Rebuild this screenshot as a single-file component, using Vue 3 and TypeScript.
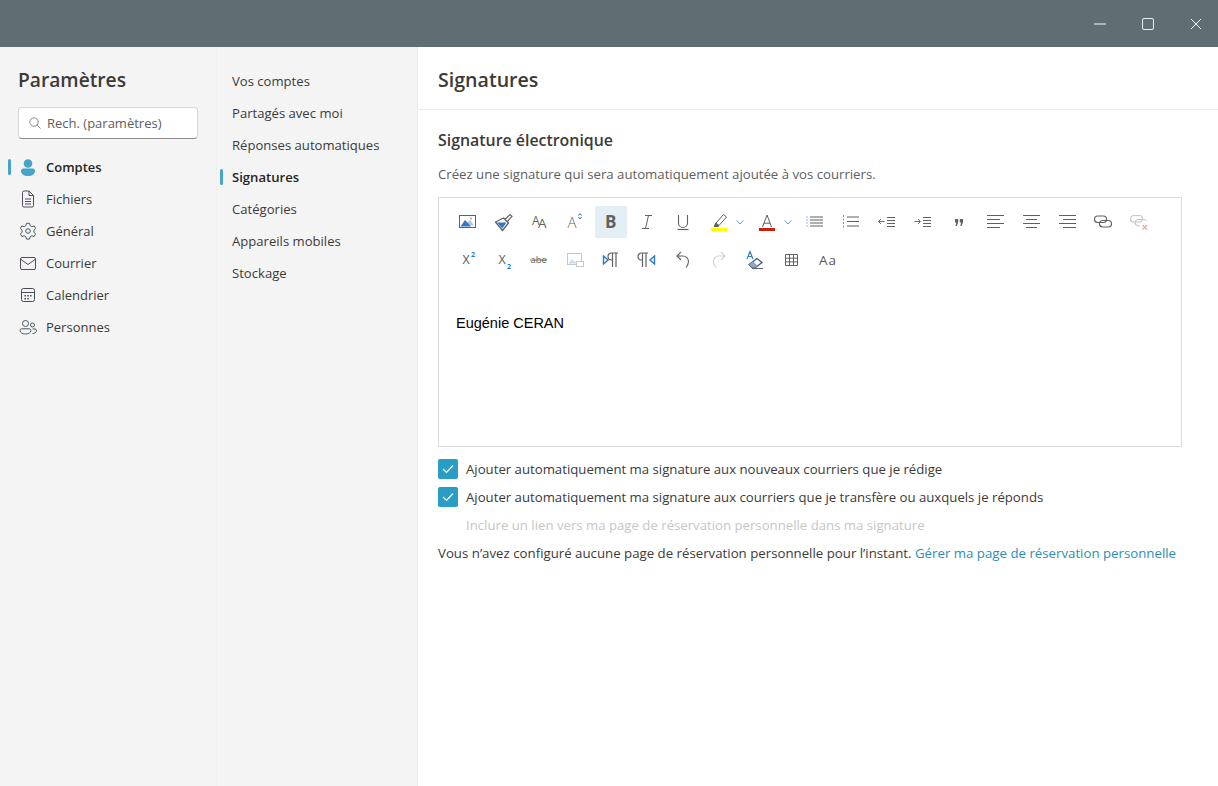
<script setup lang="ts">
interface Tool { id: string; svg: string; active?: boolean; chevron?: boolean }
const G = '#616161', B = '#2f78c8', L = '#c8c8c8'
const line = (x1: number, y1: number, x2: number, y2: number, c = G) => `<path d="M${x1} ${y1}H${x2}" stroke="${c}" fill="none"/>`
const lines = (rows: [number, number][], ys: number[]) => rows.map((r, i) => line(r[0], ys[i], r[1], ys[i])).join('')
const ALIGN_Y = [3.5, 7.5, 11.5, 15.5]
const row1: Tool[] = [
  { id: 'image', svg: `<rect x="2.5" y="3.5" width="16" height="12" fill="none" stroke="${G}"/><path d="M10 11l3-3 4 5.500h-6z" fill="#b9c6d6"/><path d="M3.500 14.500 8 8l6 6.500z" fill="${B}"/><circle cx="14" cy="6.500" r="1" fill="#9ab"/>` },
  { id: 'brush', svg: `<path d="M12 7.500 17 2.500l2 1.800-4.500 5.200" fill="none" stroke="${G}" stroke-width="1.200"/><path d="M2.500 10 10.500 6l5 5-6 7.500z" fill="none" stroke="${G}" stroke-width="1.300" stroke-linejoin="round"/><path d="M4 10.500 13.500 10.500 9.300 16.500z" fill="${B}"/>` },
  { id: 'fontsize', svg: `<text x="3" y="12.500" class="ti" font-size="12">A</text><text x="9" y="16" class="ti" font-size="13.500">A</text>` },
  { id: 'grow', svg: `<text x="2.500" y="16" class="ti th" font-size="15">A</text><path d="M13.500 3.500 15 1.500l1.500 2M13.500 5l1.500 2 1.500-2" fill="none" stroke="${B}"/>` },
  { id: 'bold', active: true, svg: `<text x="4" y="16" class="ti tb" font-size="17">B</text>` },
  { id: 'italic', svg: `<path d="M8 3.500h7M5 16.500h7M11.500 3.500 8.500 16.500" fill="none" stroke="${G}"/>` },
  { id: 'underline', svg: `<path d="M5.500 3v8a4.500 4.500 0 0 0 9 0V3" fill="none" stroke="${G}" stroke-width="1.100"/><path d="M4.500 17.500h11" stroke="${G}" stroke-width="1.200"/>` },
  { id: 'highlight', chevron: true, svg: `<path d="M7 11 14.500 2.500l3 2.500L10 13.500z" fill="none" stroke="${G}"/><path d="M6.500 10.500 10.500 14l-1.500 1H4.500z" fill="${G}"/><rect x="2" y="16" width="16" height="3" fill="#ffff00"/>` },
  { id: 'color', chevron: true, svg: `<path d="M5.500 15 10 3l4.500 12M6.900 11.200h6.200" fill="none" stroke="${G}"/><rect x="2" y="16" width="16" height="3" fill="#c8200f"/>` },
  { id: 'bullets', svg: `<path d="M2 4.500v1M2 7.500v1M2 10.500v1M2 13.500v1" stroke="${B}"/>` + lines([[5, 18], [5, 18], [5, 18], [5, 18]], [5, 8, 11, 14]) },
  { id: 'numbers', svg: `<path d="M2.500 3v13" stroke="#5b9be0" stroke-dasharray="2 1.500"/>` + lines([[6, 18], [6, 18], [6, 18]], [5, 9.500, 14]) },
  { id: 'outdent', svg: `<path d="M7.500 9.500h-6M4 7 1.500 9.500 4 12" fill="none" stroke="${B}"/>` + lines([[10, 18], [10, 18], [10, 18], [10, 18]], [5.500, 8.500, 11.500, 14.500]) },
  { id: 'indent', svg: `<path d="M1.500 9.500h6M5 7l2.500 2.500L5 12" fill="none" stroke="${B}"/>` + lines([[10, 18], [10, 18], [10, 18], [10, 18]], [5.500, 8.500, 11.500, 14.500]) },
  { id: 'quote', svg: `<path d="M6 7h3.200v3.200L7.800 14H6.500L7.300 10.500H6zM10.800 7H14v3.200L12.600 14h-1.300l.8-3.500h-1.300z" fill="${G}"/>` },
  { id: 'left', svg: lines([[2, 19], [2, 15], [2, 19], [2, 15]], ALIGN_Y) },
  { id: 'center', svg: lines([[2, 19], [5, 16], [2, 19], [5, 16]], ALIGN_Y) },
  { id: 'right', svg: lines([[2, 19], [6, 19], [2, 19], [6, 19]], ALIGN_Y) },
  { id: 'link', svg: `<rect x="1.500" y="4" width="12" height="6.500" rx="3.250" fill="none" stroke="${G}" stroke-width="1.200"/><rect x="6.500" y="8.500" width="12" height="6.500" rx="3.250" fill="none" stroke="${G}" stroke-width="1.200"/>` },
  { id: 'unlink', svg: `<rect x="1.500" y="3.500" width="12" height="6.500" rx="3.250" fill="none" stroke="${L}" stroke-width="1.200"/><path d="M11 14H9.500a3.250 3.250 0 0 1 0-6.500H15a3.250 3.250 0 0 1 2.500 1.500" fill="none" stroke="${L}" stroke-width="1.200"/><path d="M13.500 13l4.500 4.500M18 13l-4.500 4.500" stroke="#eda79f" stroke-width="1.300"/>` },
]
const row2: Tool[] = [
  { id: 'sup', svg: `<text x="5.500" y="14" class="ti tl" font-size="12.500">X</text><text x="14" y="7" class="ti tbb" font-size="7">2</text>` },
  { id: 'sub', svg: `<text x="5.500" y="14" class="ti tl" font-size="12.500">X</text><text x="14" y="18.500" class="ti tbb" font-size="7">2</text>` },
  { id: 'strike', svg: `<text x="1.500" y="13" class="ti" font-size="9.500">abe</text><path d="M1 10h17" stroke="${G}" stroke-width=".8"/>` },
  { id: 'alt', svg: `<rect x="2.500" y="3.500" width="14" height="11" fill="none" stroke="${L}"/><path d="M3.500 13.500 7 9l3 3 2-1 3 2.500z" fill="#cfdcec"/><rect x="11.500" y="11.500" width="7" height="5" fill="#fff" stroke="${L}"/>` },
  { id: 'ltr', svg: `<path d="M2.500 6l4.500 4-4.500 4z" fill="none" stroke="${B}" stroke-width="1.400"/><path d="M11.500 3v14M15 3v14M17 3h-6.500a3.500 3.500 0 0 0 0 7h1" fill="none" stroke="${G}" stroke-width="1.200"/>` },
  { id: 'rtl', svg: `<path d="M17.500 6 13 10l4.500 4z" fill="none" stroke="${B}" stroke-width="1.400"/><path d="M5.500 3v14M9 3v14M11 3H4.500a3.500 3.500 0 0 0 0 7h1" fill="none" stroke="${G}" stroke-width="1.200"/>` },
  { id: 'undo', svg: `<path d="M8 2 4 6l4 4M4.500 6H10a5.500 5.500 0 0 1 5.500 5.500c0 2.300-1 4-2.500 6" fill="none" stroke="${G}" stroke-width="1.100"/>` },
  { id: 'redo', svg: `<path d="M12 2l4 4-4 4M15.500 6H10a5.500 5.500 0 0 0-5.500 5.500c0 2.300 1 4 2.500 6" fill="none" stroke="#d0d0d0" stroke-width="1.100"/>` },
  { id: 'clear', svg: `<path d="M2 9 5 1.500 8 9M3 6.500h4" fill="none" stroke="${B}" stroke-width="1.100"/><path d="M4 14.500 12 8.500l5 4-6.500 5H7z" fill="none" stroke="#3e5a7a" stroke-width="1.300"/><path d="M4 14.500 8 11.500l4.500 4-2 2H7z" fill="#8fa8c8"/><path d="M7 18.500h11" stroke="${G}"/>` },
  { id: 'table', svg: `<path d="M4.500 4.500h12v11h-12zM4.500 8.200h12M4.500 11.900h12M8.500 4.500v11M12.500 4.500v11" fill="none" stroke="${G}"/>` },
  { id: 'case', svg: `<text x="2" y="15" class="ti tl" font-size="13.500" letter-spacing="1">Aa</text>` },
]
const nav = [
  { label: 'Comptes', icon: 'user', active: true },
  { label: 'Fichiers', icon: 'file' },
  { label: 'Général', icon: 'gear' },
  { label: 'Courrier', icon: 'mail' },
  { label: 'Calendrier', icon: 'cal' },
  { label: 'Personnes', icon: 'people' },
]
const sub = ['Vos comptes', 'Partagés avec moi', 'Réponses automatiques', 'Signatures', 'Catégories', 'Appareils mobiles', 'Stockage']
</script>

<template>
  <div class="app">
    <header class="titlebar">
      <button class="win" aria-label="Réduire"><svg width="12" height="12" viewBox="0 0 12 12"><path d="M0 6h12" stroke="#e3e7e8" stroke-width="1.200"/></svg></button>
      <button class="win" aria-label="Agrandir"><svg width="12" height="12" viewBox="0 0 12 12"><rect x=".5" y=".5" width="11" height="11" rx="1.500" fill="none" stroke="#e8f2f5"/></svg></button>
      <button class="win" aria-label="Fermer"><svg width="12" height="12" viewBox="0 0 12 12"><path d="M1 1l10 10M11 1 1 11" stroke="#f2f4f4" stroke-width="1"/></svg></button>
    </header>
    <div class="body">
      <aside class="side">
        <h1>Paramètres</h1>
        <div class="search">
          <svg width="14" height="14" viewBox="0 0 14 14"><circle cx="6" cy="6" r="4.200" fill="none" stroke="#8a8a8a"/><path d="M9 9l3.500 3.500" stroke="#8a8a8a"/></svg>
          <span>Rech. (paramètres)</span>
        </div>
        <nav class="mainnav">
          <a v-for="n in nav" :key="n.label" class="navitem" :class="{ on: n.active }">
            <svg width="20" height="20" viewBox="0 0 20 20" class="navicon">
              <template v-if="n.icon === 'user'">
                <circle cx="10" cy="6.500" r="4.300" fill="#45a5c7"/><path d="M3 14c0-1.500 1-2.500 2.500-2.500h9c1.500 0 2.500 1 2.500 2.500 0 3-3 5-7 5s-7-2-7-5z" fill="#45a5c7"/>
              </template>
              <template v-else-if="n.icon === 'file'">
                <path d="M4.500 3.500a1.500 1.500 0 0 1 1.500-1.500h5l4.500 4.500v10a1.500 1.500 0 0 1-1.500 1.500H6a1.500 1.500 0 0 1-1.500-1.500zM11 2v4.500h4.500M7 10h6M7 12.500h6M7 15h6" fill="none" stroke="#5a4a60"/>
              </template>
              <template v-else-if="n.icon === 'gear'">
                <circle cx="10" cy="10" r="2.300" fill="none" stroke="#4a5a62"/><path d="M8.500 2.300h3l.6 2.300 1.700 1 2.300-.7 1.500 2.600-1.700 1.700v2l1.700 1.700-1.500 2.600-2.300-.7-1.700 1-.6 2.300h-3l-.6-2.300-1.700-1-2.300.7-1.500-2.600 1.700-1.700v-2L2.400 7.500l1.500-2.600 2.300.7 1.700-1z" fill="none" stroke="#4a5a62" stroke-linejoin="round"/>
              </template>
              <template v-else-if="n.icon === 'mail'">
                <rect x="2.500" y="4.500" width="15" height="12" rx="1.500" fill="none" stroke="#5a4a60"/><path d="M3 6.500l7 5 7-5" fill="none" stroke="#5a4a60"/>
              </template>
              <template v-else-if="n.icon === 'cal'">
                <rect x="3.500" y="3.500" width="13" height="13" rx="2" fill="none" stroke="#4a4a5a"/><path d="M3.500 7.500h13" stroke="#4a4a5a"/><path d="M6.500 10h1.500v1.500H6.500zM9.300 10h1.500v1.500H9.300zM12 10h1.500v1.500H12zM6.500 13h1.500v1.500H6.500zM9.300 13h1.500v1.500H9.300z" fill="#4a4a5a"/>
              </template>
              <template v-else>
                <circle cx="7.500" cy="6.500" r="3" fill="none" stroke="#4a5a62"/><circle cx="14.500" cy="8" r="2" fill="none" stroke="#4a5a62"/><path d="M2 13.500c0-1 .7-1.700 1.700-1.700h7.500c1 0 1.700.7 1.700 1.700 0 2-2.300 3.500-5.400 3.500S2 15.500 2 13.500zM14.500 16.500c2 0 4-1 4-3 0-.8-.6-1.500-1.500-1.500h-2.500" fill="none" stroke="#4a5a62"/>
              </template>
            </svg>
            <span>{{ n.label }}</span>
          </a>
        </nav>
      </aside>
      <nav class="subnav">
        <a v-for="s in sub" :key="s" class="subitem" :class="{ on: s === 'Signatures' }">{{ s }}</a>
      </nav>
      <main class="main">
        <h2 class="title">Signatures</h2>
        <section class="content">
          <h3>Signature électronique</h3>
          <p class="desc">Créez une signature qui sera automatiquement ajoutée à vos courriers.</p>
          <div class="editor">
            <div class="toolbar">
              <div v-for="(row, i) in [row1, row2]" :key="i" class="trow">
                <div v-for="t in row" :key="t.id" class="tool" :class="{ wide: t.chevron }">
                  <span class="tbtn" :class="{ active: t.active }">
                    <svg class="ticon" width="20" height="20" viewBox="0 0 20 20" v-html="t.svg"></svg>
                  </span>
                  <svg v-if="t.chevron" class="chev" width="8" height="5" viewBox="0 0 8 5"><path d="M.5.5 4 4 7.500.5" fill="none" stroke="#6a9fd8"/></svg>
                </div>
              </div>
            </div>
            <div class="sig">Eugénie CERAN</div>
          </div>
          <label class="check"><span class="box"><svg width="12" height="10" viewBox="0 0 12 10"><path d="M1 5l3.500 3.500L11 1.500" fill="none" stroke="#fff" stroke-width="1.200"/></svg></span>Ajouter automatiquement ma signature aux nouveaux courriers que je rédige</label>
          <label class="check"><span class="box"><svg width="12" height="10" viewBox="0 0 12 10"><path d="M1 5l3.500 3.500L11 1.500" fill="none" stroke="#fff" stroke-width="1.200"/></svg></span>Ajouter automatiquement ma signature aux courriers que je transfère ou auxquels je réponds</label>
          <div class="check disabled">Inclure un lien vers ma page de réservation personnelle dans ma signature</div>
          <p class="note">Vous n’avez configuré aucune page de réservation personnelle pour l’instant. <a>Gérer ma page de réservation personnelle</a></p>
        </section>
      </main>
    </div>
  </div>
</template>

<style>
html, body { margin: 0; background: #fff; }
.ti { font-family: "Open Sans", sans-serif; fill: #616161; }
.th { font-weight: 300; }
.tl { fill: #5a5a5a; }
.tb { font-weight: 700; }
.tbb { font-weight: 700; fill: #2f78c8; }
</style>

<style scoped>
.app { width: 1218px; height: 786px; display: flex; flex-direction: column; overflow: hidden; font-family: "Open Sans", "Noto Sans", sans-serif; font-size: 13px; color: #3b3a39; }
.titlebar { height: 47px; flex: none; box-sizing: border-box; padding-right: 16px; gap: 36px; background: #5f6e73; display: flex; justify-content: flex-end; }
.win { width: 12px; height: 47px; border: 0; padding: 0; background: none; display: flex; align-items: center; justify-content: center; }
.body { flex: 1; display: flex; min-height: 0; }
.side { width: 217px; flex: none; background: #f4f4f4; box-sizing: border-box; padding: 19px 0 0; border-right: 1px solid #f0f0f0; }
h1 { margin: 0 0 0 18px; font-size: 19.200px; line-height: 28px; font-weight: 600; color: #3b3a39; }
.search { margin: 13px 0 0 18px; width: 180px; height: 32px; box-sizing: border-box; background: #fff; border: 1px solid #d6d6d6; border-bottom-color: #8a8a8a; border-radius: 4px; display: flex; align-items: center; gap: 5px; padding-left: 9px; color: #605e5c; }
.mainnav { margin-top: 12px; display: flex; flex-direction: column; }
.navitem { height: 32px; display: flex; align-items: center; padding-left: 18px; gap: 8px; position: relative; }
.navitem.on { font-weight: 600; color: #252423; }
.navitem.on::before, .subitem.on::before { content: ""; position: absolute; left: 8px; top: 8px; width: 3px; height: 16px; border-radius: 2px; background: #45a5c7; }
.subnav { width: 201px; flex: none; background: #f4f4f4; box-sizing: border-box; border-right: 1px solid #ececec; padding-top: 18px; display: flex; flex-direction: column; font-size: 13.100px; }
.subitem { height: 32px; line-height: 32px; padding-left: 15px; position: relative; }
.subitem.on { font-weight: 600; color: #252423; }
.subitem.on::before { left: 3px; }
.main { flex: 1; min-width: 0; background: #fff; font-size: 13.200px; }
.title { margin: 0; height: 63px; box-sizing: border-box; padding: 19px 0 0 20px; border-bottom: 1px solid #ececec; font-size: 19.600px; line-height: 28px; font-weight: 600; color: #3b3a39; }
.content { padding: 19px 36px 0 20px; }
h3 { margin: 0; font-size: 15.900px; line-height: 22px; font-weight: 600; color: #3b3a39; }
.desc { margin: 13px 0 0; line-height: 20px; color: #605e5c; }
.editor { margin-top: 13px; height: 250px; box-sizing: border-box; border: 1px solid #dcdcdc; }
.toolbar { padding: 5px 0 0 10px; }
.trow { display: flex; height: 38px; }
.tool { width: 36px; height: 38px; display: flex; align-items: center; flex: none; }
.tool.wide { width: 48px; }
.tbtn { width: 32px; height: 32px; margin: 0 2px; flex: none; border-radius: 2px; display: flex; align-items: center; justify-content: center; }
.tbtn.active { background: #e3eff4; }
.ticon { overflow: visible; }
.chev { margin-left: -1px; flex: none; }
.sig { margin: 34px 0 0 17px; font-family: "Liberation Sans", Arial, sans-serif; font-size: 14.500px; line-height: 20px; color: #000; }
.check { display: flex; align-items: center; height: 28px; color: #3b3a39; }
.editor + .check { margin-top: 8px; }
.box { width: 20px; height: 20px; background: #2a9dc4; border-radius: 2px; margin-right: 8px; display: flex; align-items: center; justify-content: center; }
.disabled { padding-left: 28px; color: #c8c6c4; }
.note { margin: 0; height: 28px; line-height: 28px; white-space: nowrap; color: #3b3a39; font-size: 13.250px; }
.note a { color: #2a8fb5; }
</style>
